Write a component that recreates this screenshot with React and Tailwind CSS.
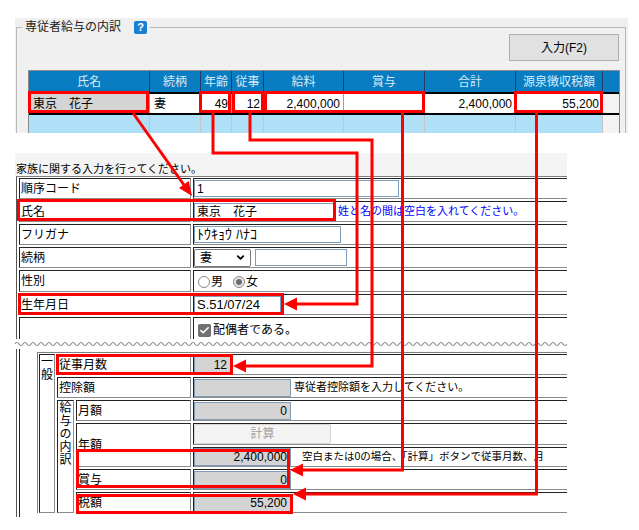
import { ChevronDown, Check } from "lucide-react";

const headers = ["氏名", "続柄", "年齢", "従事", "給料", "賞与", "合計", "源泉徴収税額"];

const rowData = [
    { v: "東京　花子", left: true, gray: true },
    { v: "妻", left: true },
    { v: "49" },
    { v: "12" },
    { v: "2,400,000" },
    { v: "" },
    { v: "2,400,000" },
    { v: "55,200" },
];

const grid = "grid grid-cols-[121px_51px_31px_32px_80px_81px_91px_87px_1fr]";

// html table style cell: dark top/left, light bottom/right
const cell = "border border-t-[#222] border-l-[#222] border-r-[#8c8c8c] border-b-[#8c8c8c]";
const valueCell = "flex-1 flex items-center border-t border-l border-b border-t-[#222] border-l-[#222] border-b-[#8c8c8c]";

const inputBox = "flex h-[17px] items-center border border-[#7f9db9] bg-white px-[2px]";
const grayBox = "flex h-[18px] items-center justify-end border border-[#7f9db9] bg-[#d4d4d4] pr-[3px] text-[12px]";

// wavy cut line
let wave = "M0 5";
for (let x = 0; x < 552; x += 8) {
    wave += ` q2 -3 4 0 q2 3 4 0`;
}

function FormRow({ label, h, children }) {
    return (
        <div className={`flex gap-[2px] ${h}`}>
            <div className={`${cell} flex w-[172px] shrink-0 items-center pl-[1px]`}>{label}</div>
            <div className={valueCell}>{children}</div>
        </div>
    );
}

function SubRow({ label, w, h, children }) {
    return (
        <div className={`flex gap-[2px] ${h}`}>
            <div className={`${cell} flex shrink-0 items-center pl-[1px] ${w}`}>{label}</div>
            <div className={valueCell}>{children}</div>
        </div>
    );
}

function Stacked({ chars }) {
    return (
        <div className="flex flex-col items-center pt-[1px] text-[12px] leading-[13px]">
            {chars.split("").map((c, i) => (
                <span key={i}>{c}</span>
            ))}
        </div>
    );
}

export default function App() {
    return (
        <div className="relative h-[530px] w-[639px] overflow-hidden bg-white font-['Liberation_Sans','Noto_Sans_CJK_JP',sans-serif] text-[12px] text-black">

            {/* TOP PANEL */}

            <div className="ml-[15px] mt-[18px] h-[115px] w-[613px] overflow-hidden bg-[#f0f0f0]">
                <fieldset className="ml-px mt-[2px] w-[610px] border border-[#b9b9b9] pb-[20px]">
                    <legend className="ml-[5px] flex h-[14px] items-center pl-[3px] pr-[3px] leading-[14px] text-[#222]">
                        <span>専従者給与の内訳</span>
                        <span className="ml-[13px] flex h-[13px] w-[13px] items-center justify-center rounded-[2px] bg-[#1b7fd1] text-[11px] font-bold text-white">?</span>
                    </legend>

                    <div className="flex justify-end pr-[6px]">
                        <button className="h-[27px] w-[110px] border border-[#adadad] bg-[#e1e1e1] text-[12px]">
                            入力(F2)
                        </button>
                    </div>

                    <div className="ml-[11px] mt-[9px] w-[592px] border-l border-r border-t border-[#8a8a8a]">
                        <div className={`${grid} h-[21px] bg-[#0a7cc1]`}>
                            {headers.map((hd) => (
                                <div key={hd} className="flex items-center justify-center border-r border-[#1d3f62] text-[#d6ebf8]">
                                    {hd}
                                </div>
                            ))}
                            <div />
                        </div>

                        <div className={`${grid} h-[23px] border-y-2 border-black`}>
                            {rowData.map((c, i) => (
                                <div
                                    key={i}
                                    className={`flex items-center border-r border-[#a0a0a0] ${c.gray ? "bg-[#d4d4d4]" : "bg-white"} ${c.left ? "pl-[4px]" : "justify-end pr-[3px]"}`}
                                >
                                    {c.v}
                                </div>
                            ))}
                            <div className="bg-[#f3f3f3]" />
                        </div>

                        {[0, 1].map((r) => (
                            <div key={r} className={`${grid} h-[21px]`}>
                                {headers.map((hd) => (
                                    <div key={hd} className="border-b border-r border-[#c4c4c4] bg-[#b0e0f8]" />
                                ))}
                                <div className="bg-[#f3f3f3]" />
                            </div>
                        ))}
                    </div>
                </fieldset>
            </div>

            {/* FAMILY FORM */}

            <div className="ml-[15px] mt-[20px] w-[552px]">

                <div className="flex h-[23px] items-end bg-[#f4f4f4] pl-[1px] text-[11px] leading-[14px]">
                    家族に関する入力を行ってください。
                </div>

                <div className="ml-px h-[163px] w-[551px] overflow-hidden border-l border-t border-l-[#555] border-t-[#808080] pl-[2px] pt-px">
                    <div className="flex flex-col gap-[2px]">

                        <FormRow label="順序コード" h="h-[21px]">
                            <div className={`${inputBox} w-[205px]`}>1</div>
                        </FormRow>

                        <FormRow label="氏名" h="h-[21px]">
                            <div className={`${inputBox} w-[140px]`}>東京　花子</div>
                            <span className="ml-[4px] text-[11px] text-[#0000ff]">姓と名の間は空白を入れてください。</span>
                        </FormRow>

                        <FormRow label="フリガナ" h="h-[21px]">
                            <div className={`${inputBox} w-[147px] text-[14px]`}>ﾄｳｷｮｳ ﾊﾅｺ</div>
                        </FormRow>

                        <FormRow label="続柄" h="h-[21px]">
                            <div className="flex h-[18px] w-[57px] items-center justify-between rounded-[2px] border border-[#7a7a7a] bg-white pl-[5px] pr-[4px]">
                                <span>妻</span>
                                <ChevronDown size={11} strokeWidth={4} />
                            </div>
                            <div className={`${inputBox} ml-[4px] w-[92px]`} />
                        </FormRow>

                        <FormRow label="性別" h="h-[22px]">
                            <div className="flex items-center pl-[4px] pt-[2px]">
                                <span className="h-[12px] w-[12px] rounded-full border border-[#8a8a8a] bg-white" />
                                <span className="ml-[1px]">男</span>
                                <span className="ml-[10px] flex h-[12px] w-[12px] items-center justify-center rounded-full border border-[#8a8a8a] bg-[#e6e6e6]">
                                    <span className="h-[6px] w-[6px] rounded-full bg-[#6e6e6e]" />
                                </span>
                                <span className="ml-[1px]">女</span>
                            </div>
                        </FormRow>

                        <FormRow label="生年月日" h="h-[21px]">
                            <div className={`${inputBox} w-[87px] text-[13px]`}>S.51/07/24</div>
                        </FormRow>

                        <FormRow label="" h="h-[26px]">
                            <div className="flex items-center pl-[4px]">
                                <span className="flex h-[13px] w-[13px] items-center justify-center rounded-[2px] bg-[#707070]">
                                    <Check size={11} strokeWidth={3.5} color="#fff" />
                                </span>
                                <span className="ml-[2px]">配偶者である。</span>
                            </div>
                        </FormRow>
                    </div>
                </div>

                {/* cut line */}

                <div className="h-[10px]">
                    <svg width="552" height="10">
                        <path d={wave} fill="none" stroke="#8a8a8a" strokeWidth="1.2" />
                    </svg>
                </div>

                <div className="ml-px h-[168px] w-[551px] overflow-hidden border-l border-[#555] pl-[2px]">
                    <div className="h-full border-l border-[#222] pl-[17px] pt-[3px]">
                        <div className="flex gap-[2px] border-l border-t border-[#808080] pl-px pt-px">

                            <div className={`${cell} w-[16px] shrink-0`}>
                                <Stacked chars="一般" />
                            </div>

                            <div className="flex flex-1 flex-col gap-[2px]">

                                <SubRow label="従事月数" w="w-[134px]" h="h-[21px]">
                                    <div className={`${grayBox} w-[37px]`}>12</div>
                                </SubRow>

                                <SubRow label="控除額" w="w-[134px]" h="h-[21px]">
                                    <div className={`${grayBox} w-[97px]`} />
                                    <span className="ml-[3px] text-[11px]">専従者控除額を入力してください。</span>
                                </SubRow>

                                <div className="flex gap-[2px]">
                                    <div className={`${cell} w-[17px] shrink-0`}>
                                        <Stacked chars="給与の内訳" />
                                    </div>

                                    <div className="flex flex-1 flex-col gap-[2px]">

                                        <SubRow label="月額" w="w-[115px]" h="h-[21px]">
                                            <div className={`${grayBox} w-[97px]`}>0</div>
                                        </SubRow>

                                        <div className="flex gap-[2px]">
                                            <div className={`${cell} flex w-[115px] shrink-0 items-center pl-[1px]`}>年額</div>
                                            <div className="flex flex-1 flex-col gap-[2px]">
                                                <div className={`${valueCell} h-[22px]`}>
                                                    <div className="flex h-[20px] w-[137px] items-center justify-center rounded-[2px] border border-[#d4d4d4] bg-[#f3f3f3] text-[#a0a0a0]">
                                                        計算
                                                    </div>
                                                </div>
                                                <div className={`${valueCell} h-[22px]`}>
                                                    <div className={`${grayBox} w-[97px]`}>2,400,000</div>
                                                    <span className="ml-[11px] whitespace-nowrap text-[10.5px]">空白または0の場合、「計算」ボタンで従事月数、月</span>
                                                </div>
                                            </div>
                                        </div>

                                        <SubRow label="賞与" w="w-[115px]" h="h-[21px]">
                                            <div className={`${grayBox} w-[97px]`}>0</div>
                                        </SubRow>

                                        <SubRow label="税額" w="w-[115px]" h="h-[21px]">
                                            <div className={`${grayBox} w-[97px]`}>55,200</div>
                                        </SubRow>
                                    </div>
                                </div>
                            </div>
                        </div>
                    </div>
                </div>
            </div>

            {/* ANNOTATIONS */}

            <svg className="pointer-events-none absolute left-0 top-0" width="639" height="530">
                <g fill="none" stroke="#ff0000" strokeWidth="3">
                    <rect x="29.5" y="92.5" width="118" height="19" />
                    <rect x="200.5" y="92.5" width="29" height="19" />
                    <rect x="233.5" y="92.5" width="29" height="19" />
                    <rect x="265.5" y="92.5" width="158" height="19" />
                    <rect x="515.5" y="92.5" width="86" height="19" />
                    <rect x="18.5" y="200.5" width="316" height="19" />
                    <rect x="19.5" y="294.5" width="263" height="19" />
                    <rect x="57.5" y="355.5" width="174" height="18" />
                    <rect x="77.5" y="450.5" width="211" height="36" />
                    <rect x="77.5" y="495.5" width="214" height="17" />

                    <polyline points="133,113 184,185" />
                    <polyline points="213,113 213,153 357,153 357,304 296,304" />
                    <polyline points="250,113 250,140 372,140 372,366 245,366" />
                    <polyline points="402.5,113 402.5,470 302,470" />
                    <polyline points="536.5,113 536.5,494 305,494" />
                </g>
                <g fill="#ff0000">
                    <polygon points="192,196 188.8,181.1 179,188.1" />
                    <polygon points="284,304 297,297.5 297,310.5" />
                    <polygon points="233,366 246,359.5 246,372.5" />
                    <polygon points="290,470 303,463.5 303,476.5" />
                    <polygon points="293,494 306,487.5 306,500.5" />
                </g>
            </svg>
        </div>
    );
}
